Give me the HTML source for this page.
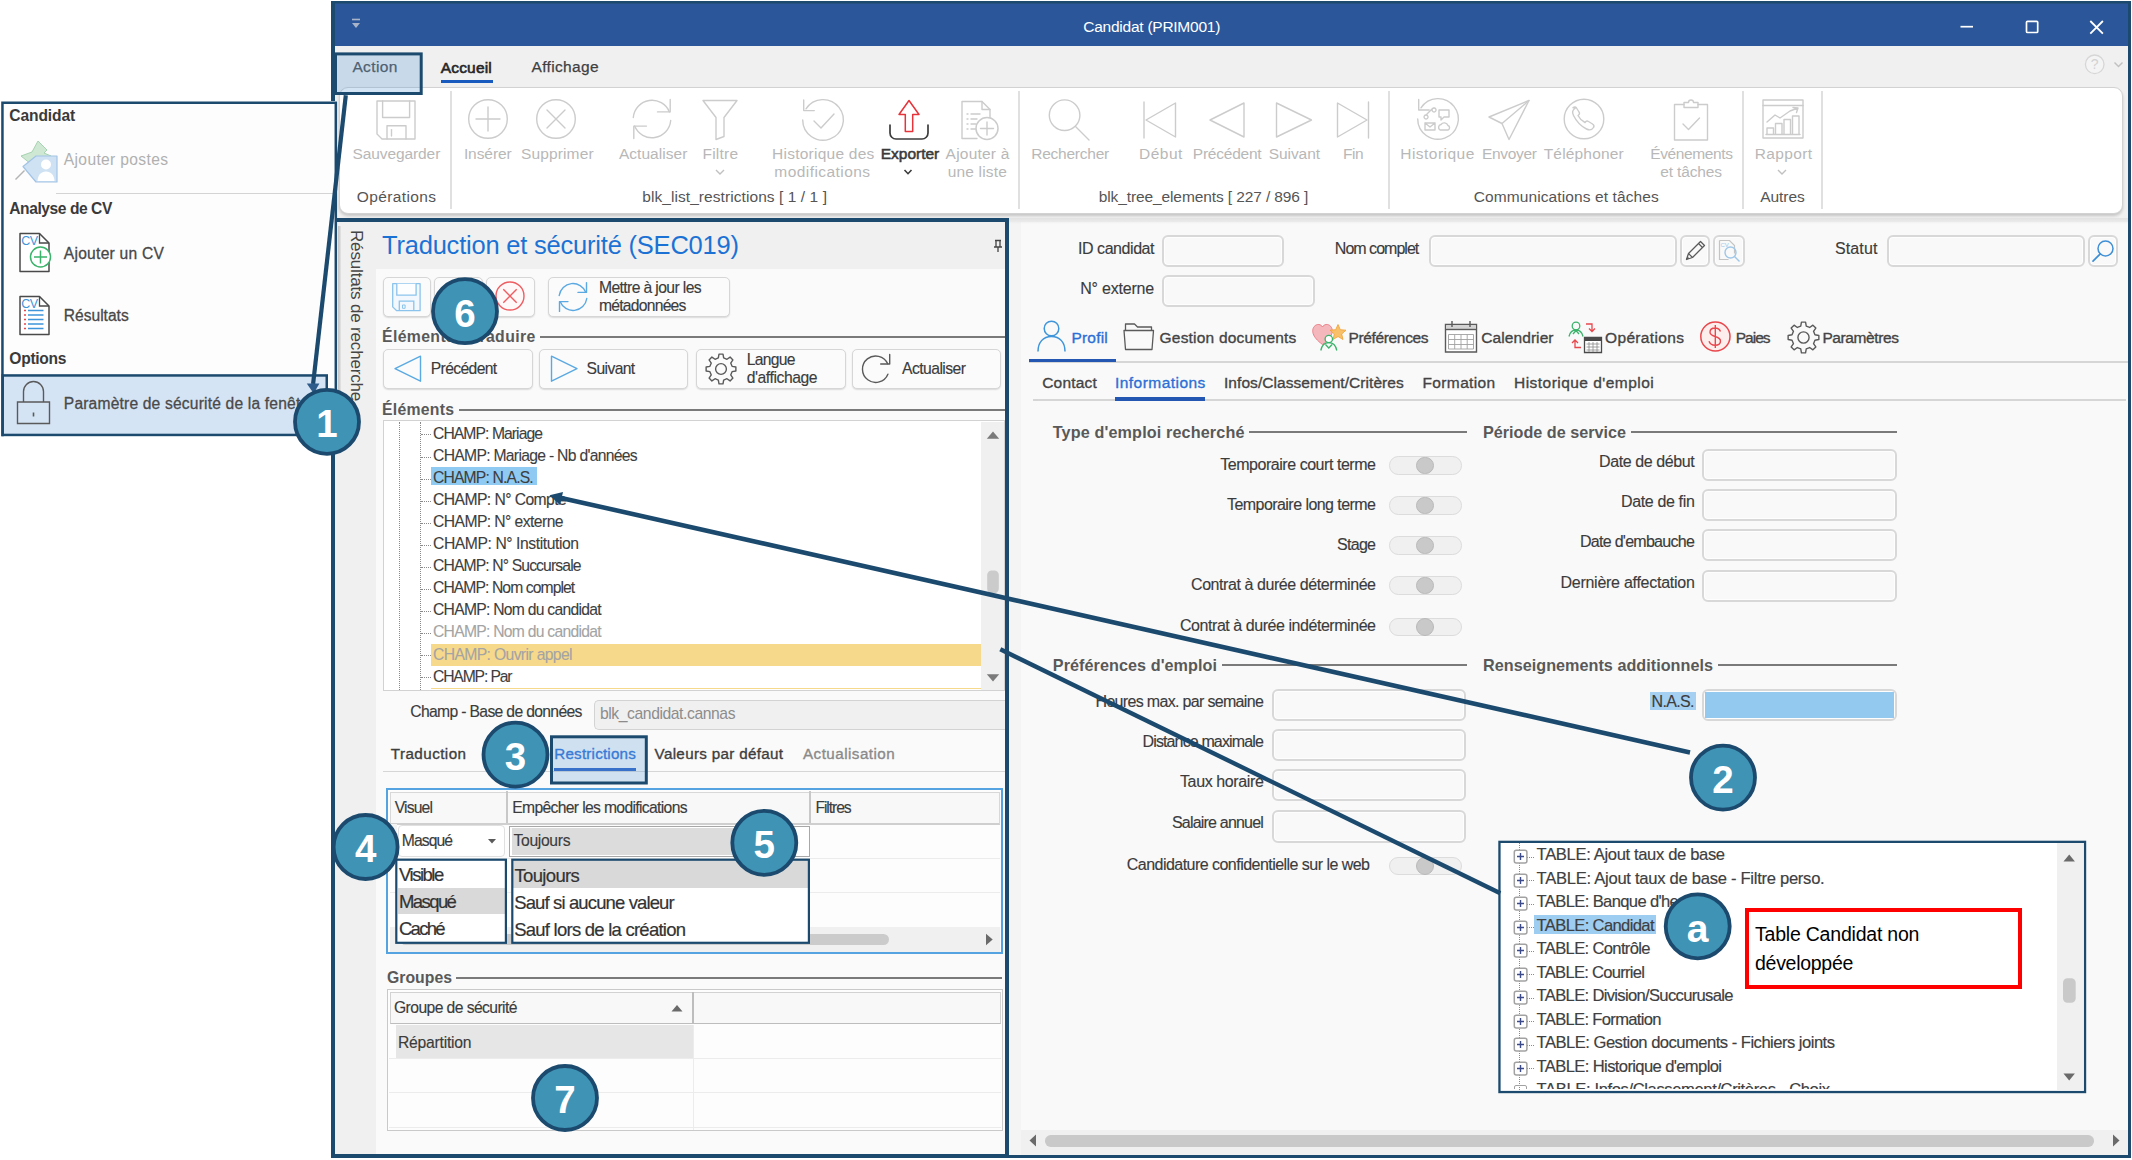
<!DOCTYPE html>
<html lang="fr"><head><meta charset="utf-8"><title>Candidat (PRIM001)</title>
<style>
html,body{margin:0;padding:0;}
body{width:2132px;height:1160px;position:relative;overflow:hidden;background:#fff;font-family:"Liberation Sans",sans-serif;}
.b{position:absolute;box-sizing:border-box;}
.t{position:absolute;white-space:nowrap;}
svg{overflow:visible;}

</style></head>
<body>
<div class="b" style="left:331px;top:1px;width:1800px;height:1157px;background:#1b4a6e;"></div>
<div class="b" style="left:335px;top:3.5px;width:1793px;height:42.9px;background:#2b579a;"></div>
<div class="b" style="left:335px;top:2.5px;width:1793px;height:1.5px;background:#25507f;"></div>
<div class="b" style="left:335px;top:46.4px;width:1793px;height:1108.8px;background:#f0f0f0;"></div>
<svg class="b" style="left:349px;top:16px;" width="14" height="14" viewBox="0 0 14 14"><path d="M3 3.5h8" stroke="#aab4c8" stroke-width="1.6" fill="none"/><path d="M3 7h8l-4 5z" fill="#aab4c8"/></svg>
<div class="t" style="left:1083.30px;top:17.30px;font-size:15.5px;line-height:20px;color:#ffffff;letter-spacing:-0.252px;">Candidat (PRIM001)</div>
<svg class="b" style="left:1950.7px;top:13.8px;" width="160" height="26" viewBox="0 0 160 26"><path d="M9.5 12.7h12.5" stroke="#fff" stroke-width="1.7" fill="none"/><rect x="75.5" y="7.3" width="11.2" height="11.2" rx="1" fill="none" stroke="#fff" stroke-width="1.7"/><path d="M139.3 7l12.6 12.6M151.9 7l-12.6 12.6" stroke="#fff" stroke-width="1.8" fill="none"/></svg>
<div class="t" style="left:352.40px;top:57.30px;font-size:15.5px;line-height:20px;color:#4a4a4a;letter-spacing:0.364px;-webkit-text-stroke:0.25px #4a4a4a;">Action</div>
<div class="t" style="left:440.80px;top:57.60px;font-size:15.5px;line-height:20px;color:#262626;letter-spacing:0.156px;-webkit-text-stroke:0.6px #262626;">Accueil</div>
<div class="b" style="left:440.8px;top:79.6px;width:52px;height:3px;background:#185abd;"></div>
<div class="t" style="left:531.50px;top:57.30px;font-size:15.5px;line-height:20px;color:#404040;letter-spacing:0.344px;-webkit-text-stroke:0.25px #404040;">Affichage</div>
<svg class="b" style="left:2083.2px;top:52.7px;" width="46" height="24" viewBox="0 0 46 24"><circle cx="11.7" cy="11.3" r="9.3" fill="#f4f4f4" stroke="#d6d6d6" stroke-width="1.3"/><text x="11.7" y="16.3" font-size="14" text-anchor="middle" fill="#d2d2d2" font-family="Liberation Sans, sans-serif">?</text><path d="M31.500 9.500l4 4 4-4" fill="none" stroke="#c2c2c2" stroke-width="1.500"/></svg>
<div class="b" style="left:339px;top:86.5px;width:1783.5px;height:127.3px;background:#ffffff;border:1.3px solid #d2d2d2;border-radius:9px;box-shadow:0 2px 3px rgba(0,0,0,0.18);"></div>
<div class="b" style="left:450px;top:91px;width:2px;height:118px;background:#e0e0e0;"></div>
<div class="b" style="left:1018px;top:91px;width:2px;height:118px;background:#e0e0e0;"></div>
<div class="b" style="left:1388px;top:91px;width:2px;height:118px;background:#e0e0e0;"></div>
<div class="b" style="left:1742px;top:91px;width:2px;height:118px;background:#e0e0e0;"></div>
<div class="b" style="left:1821px;top:91px;width:2px;height:118px;background:#e0e0e0;"></div>
<svg class="b" style="left:374.3px;top:97.5px;" width="44" height="44" viewBox="-22 -22 44 44"><path d="M-19 -19h38v38h-33l-5 -5z" fill="none" stroke="#cccccc" stroke-width="1.4" stroke-linejoin="round" stroke-linecap="round"/><path d="M-13.400 -19v16.500h27v-16.500" fill="none" stroke="#cccccc" stroke-width="1.4" stroke-linejoin="round" stroke-linecap="round"/><path d="M-9 19v-13.200h19v13.200" fill="none" stroke="#cccccc" stroke-width="1.4" stroke-linejoin="round" stroke-linecap="round"/><path d="M-4.500 9.600v6.400" fill="none" stroke="#cccccc" stroke-width="1.4" stroke-linejoin="round" stroke-linecap="round"/></svg>
<div class="t" style="left:352.40px;top:144.10px;font-size:15.5px;line-height:20px;color:#b8b8b8;letter-spacing:-0.085px;">Sauvegarder</div>
<div class="t" style="left:356.70px;top:187.00px;font-size:15.5px;line-height:20px;color:#555555;letter-spacing:0.387px;">Opérations</div>
<svg class="b" style="left:466px;top:97px;" width="44" height="44" viewBox="-22 -22 44 44"><circle r="19.3" fill="none" stroke="#cccccc" stroke-width="1.4" stroke-linejoin="round" stroke-linecap="round"/><path d="M-12 0h24M0 -12v24" fill="none" stroke="#cccccc" stroke-width="1.4" stroke-linejoin="round" stroke-linecap="round"/></svg>
<div class="t" style="left:463.90px;top:144.10px;font-size:15.5px;line-height:20px;color:#b8b8b8;letter-spacing:-0.073px;">Insérer</div>
<svg class="b" style="left:533.6px;top:97px;" width="44" height="44" viewBox="-22 -22 44 44"><circle r="19.3" fill="none" stroke="#cccccc" stroke-width="1.4" stroke-linejoin="round" stroke-linecap="round"/><path d="M-9 -9l18 18M9 -9l-18 18" fill="none" stroke="#cccccc" stroke-width="1.4" stroke-linejoin="round" stroke-linecap="round"/></svg>
<div class="t" style="left:520.90px;top:144.10px;font-size:15.5px;line-height:20px;color:#b8b8b8;letter-spacing:0.150px;">Supprimer</div>
<svg class="b" style="left:629.8px;top:97px;" width="44" height="44" viewBox="-22 -22 44 44"><path d="M-18.700 -1.500A18.800 18.800 0 0 1 17.400 -7.100" fill="none" stroke="#cccccc" stroke-width="1.4" stroke-linejoin="round" stroke-linecap="round"/><path d="M18.700 1.500A18.800 18.800 0 0 1 -17.400 7.100" fill="none" stroke="#cccccc" stroke-width="1.4" stroke-linejoin="round" stroke-linecap="round"/><path d="M5.500 -7.100h12.700v-12.400" fill="none" stroke="#cccccc" stroke-width="1.4" stroke-linejoin="round" stroke-linecap="round"/><path d="M-5.500 7.100h-12.700v12.400" fill="none" stroke="#cccccc" stroke-width="1.4" stroke-linejoin="round" stroke-linecap="round"/></svg>
<div class="t" style="left:618.90px;top:144.10px;font-size:15.5px;line-height:20px;color:#b8b8b8;letter-spacing:0.038px;">Actualiser</div>
<svg class="b" style="left:697.5px;top:97.5px;" width="44" height="44" viewBox="-22 -22 44 44"><path d="M-17 -19.5h34l-13 17v19l-8 3v-22z" fill="none" stroke="#cccccc" stroke-width="1.4" stroke-linejoin="round" stroke-linecap="round"/></svg>
<div class="t" style="left:702.50px;top:144.10px;font-size:15.5px;line-height:20px;color:#b8b8b8;letter-spacing:0.211px;">Filtre</div>
<svg class="b" style="left:714px;top:167px;" width="12" height="10" viewBox="0 0 12 10"><path d="M2 3l4 4 4-4" fill="none" stroke="#c0c0c0" stroke-width="1.4"/></svg>
<svg class="b" style="left:800.6px;top:97.6px;" width="44" height="44" viewBox="-22 -22 44 44"><path d="M-17 -11.200A20.300 20.300 0 1 1 -20.300 0" fill="none" stroke="#cccccc" stroke-width="1.4" stroke-linejoin="round" stroke-linecap="round"/><path d="M-19.300 -20v10.600h10.600" fill="none" stroke="#cccccc" stroke-width="1.4" stroke-linejoin="round" stroke-linecap="round"/><path d="M-9 1l7 7 13 -14" fill="none" stroke="#cccccc" stroke-width="1.4" stroke-linejoin="round" stroke-linecap="round"/></svg>
<div class="t" style="left:772.00px;top:144.10px;font-size:15.5px;line-height:20px;color:#b8b8b8;letter-spacing:0.248px;">Historique des</div>
<div class="t" style="left:774.30px;top:161.80px;font-size:15.5px;line-height:20px;color:#b8b8b8;letter-spacing:0.437px;">modifications</div>
<svg class="b" style="left:887.4px;top:97.5px;" width="44" height="44" viewBox="-22 -22 44 44"><path d="M-19 5v8a6 6 0 0 0 6 6h26a6 6 0 0 0 6 -6v-8" fill="none" stroke="#3c3c3c" stroke-width="1.7" stroke-linecap="round"/><path d="M0 -19.5l-10 14h6.3v17h7.4v-17h6.3z" fill="#fff" stroke="#e5343a" stroke-width="1.5" stroke-linejoin="round"/></svg>
<div class="t" style="left:880.70px;top:144.10px;font-size:15.5px;line-height:20px;color:#3a3a3a;-webkit-text-stroke:0.55px #3a3a3a;">Exporter</div>
<svg class="b" style="left:901.8px;top:166.5px;" width="12" height="10" viewBox="0 0 12 10"><path d="M2.5 3l3.5 3.7 3.5-3.7" fill="none" stroke="#3a3a3a" stroke-width="1.6"/></svg>
<svg class="b" style="left:958px;top:97.5px;" width="44" height="44" viewBox="-22 -22 44 44"><path d="M-3 18.5h-15v-37h20l8 8v8" fill="none" stroke="#cccccc" stroke-width="1.4" stroke-linejoin="round" stroke-linecap="round"/><path d="M2 -18.5v8h8" fill="none" stroke="#cccccc" stroke-width="1.4" stroke-linejoin="round" stroke-linecap="round"/><path d="M-13 -6h1M-13 -1h1M-13 4h1M-13 9h1M-9 -6h9M-9 -1h6M-9 4h5M-9 9h6" fill="none" stroke="#cccccc" stroke-width="1.4" stroke-linejoin="round" stroke-linecap="round" stroke-width="1"/><circle cx="7" cy="8.5" r="11" fill="#fff" stroke="#cccccc" stroke-width="1.5"/><path d="M0.5 8.5h13M7 2v13" fill="none" stroke="#cccccc" stroke-width="1.4" stroke-linejoin="round" stroke-linecap="round"/></svg>
<div class="t" style="left:945.60px;top:144.10px;font-size:15.5px;line-height:20px;color:#b8b8b8;letter-spacing:0.220px;">Ajouter à</div>
<div class="t" style="left:947.70px;top:161.80px;font-size:15.5px;line-height:20px;color:#b8b8b8;letter-spacing:0.171px;">une liste</div>
<div class="t" style="left:642.20px;top:187.00px;font-size:15.5px;line-height:20px;color:#555555;letter-spacing:0.073px;">blk_list_restrictions [ 1 / 1 ]</div>
<svg class="b" style="left:1048px;top:97.5px;" width="44" height="44" viewBox="-22 -22 44 44"><circle cx="-5.4" cy="-4.8" r="15.3" fill="none" stroke="#cccccc" stroke-width="1.4" stroke-linejoin="round" stroke-linecap="round"/><path d="M5.5 6.5l13.5 13.5" fill="none" stroke="#cccccc" stroke-width="1.4" stroke-linejoin="round" stroke-linecap="round"/></svg>
<div class="t" style="left:1031.20px;top:144.10px;font-size:15.5px;line-height:20px;color:#b8b8b8;letter-spacing:-0.235px;">Rechercher</div>
<svg class="b" style="left:1138px;top:98px;" width="44" height="44" viewBox="-22 -22 44 44"><path d="M-16 -18v36" fill="none" stroke="#cccccc" stroke-width="1.4" stroke-linejoin="round" stroke-linecap="round"/><path d="M-14 0l29.5 -17v34z" fill="none" stroke="#cccccc" stroke-width="1.4" stroke-linejoin="round" stroke-linecap="round"/></svg>
<div class="t" style="left:1139.00px;top:144.10px;font-size:15.5px;line-height:20px;color:#b8b8b8;letter-spacing:0.485px;">Début</div>
<svg class="b" style="left:1205px;top:98px;" width="44" height="44" viewBox="-22 -22 44 44"><path d="M-17 0l34 -17v34z" fill="none" stroke="#cccccc" stroke-width="1.4" stroke-linejoin="round" stroke-linecap="round"/></svg>
<div class="t" style="left:1192.80px;top:144.10px;font-size:15.5px;line-height:20px;color:#b8b8b8;letter-spacing:-0.232px;">Précédent</div>
<svg class="b" style="left:1272px;top:98px;" width="44" height="44" viewBox="-22 -22 44 44"><path d="M17.5 0l-35 -17v34z" fill="none" stroke="#cccccc" stroke-width="1.4" stroke-linejoin="round" stroke-linecap="round"/></svg>
<div class="t" style="left:1268.70px;top:144.10px;font-size:15.5px;line-height:20px;color:#b8b8b8;letter-spacing:-0.067px;">Suivant</div>
<svg class="b" style="left:1330.5px;top:98px;" width="44" height="44" viewBox="-22 -22 44 44"><path d="M15.5 -18v36" fill="none" stroke="#cccccc" stroke-width="1.4" stroke-linejoin="round" stroke-linecap="round"/><path d="M14 0l-29.5 -17v34z" fill="none" stroke="#cccccc" stroke-width="1.4" stroke-linejoin="round" stroke-linecap="round"/></svg>
<div class="t" style="left:1343.00px;top:144.10px;font-size:15.5px;line-height:20px;color:#b8b8b8;letter-spacing:-0.516px;">Fin</div>
<div class="t" style="left:1098.70px;top:187.00px;font-size:15.5px;line-height:20px;color:#555555;letter-spacing:-0.104px;">blk_tree_elements [ 227 / 896 ]</div>
<svg class="b" style="left:1415.7px;top:97px;" width="44" height="44" viewBox="-22 -22 44 44"><path d="M-17 -11.200A20.300 20.300 0 1 1 -20.300 0" fill="none" stroke="#cccccc" stroke-width="1.4" stroke-linejoin="round" stroke-linecap="round"/><path d="M-19.300 -19.500v10.500h10.500" fill="none" stroke="#cccccc" stroke-width="1.4" stroke-linejoin="round" stroke-linecap="round"/><path d="M-11 -5l5 -5M-12 -4a2 2 0 1 0 0.1 0M-4 -11a2 2 0 1 0 0.1 0" fill="none" stroke="#cccccc" stroke-width="1.4" stroke-linejoin="round" stroke-linecap="round" stroke-width="1.1"/><path d="M1 -9h10v7h-5l-3 3v-3h-2z" fill="none" stroke="#cccccc" stroke-width="1.4" stroke-linejoin="round" stroke-linecap="round" stroke-width="1.1"/><path d="M-13 4h10v7h-10zM-13 4l5 4 5 -4" fill="none" stroke="#cccccc" stroke-width="1.4" stroke-linejoin="round" stroke-linecap="round" stroke-width="1.1"/><path d="M2 11a3 3 0 0 1 1 -5.5a4 4 0 0 1 7 1a2.4 2.4 0 0 1 0 4.5z" fill="none" stroke="#cccccc" stroke-width="1.4" stroke-linejoin="round" stroke-linecap="round" stroke-width="1.1"/></svg>
<div class="t" style="left:1400.30px;top:144.10px;font-size:15.5px;line-height:20px;color:#b8b8b8;letter-spacing:0.469px;">Historique</div>
<svg class="b" style="left:1487px;top:97.5px;" width="44" height="44" viewBox="-22 -22 44 44"><path d="M20 -19.5l-40 16.5 13 6.5 7 16z" fill="none" stroke="#cccccc" stroke-width="1.4" stroke-linejoin="round" stroke-linecap="round"/><path d="M20 -19.5l-27 23" fill="none" stroke="#cccccc" stroke-width="1.4" stroke-linejoin="round" stroke-linecap="round"/></svg>
<div class="t" style="left:1482.00px;top:144.10px;font-size:15.5px;line-height:20px;color:#b8b8b8;letter-spacing:-0.310px;">Envoyer</div>
<svg class="b" style="left:1561.7px;top:97px;" width="44" height="44" viewBox="-22 -22 44 44"><circle r="19.8" fill="none" stroke="#cccccc" stroke-width="1.4" stroke-linejoin="round" stroke-linecap="round"/><path d="M-9 -10.5c-2.5 1.5 -3 4 -1.5 7c3 6 7 10.5 13 13.5c3 1.500 5.500 1 7 -1.500c1 -1.500 0.500 -2.500 -1 -3.500l-4 -2.500c-1.500 -1 -2.500 -0.500 -3.500 1c-3 -1.500 -5.500 -4 -7 -7c1.500 -1 2 -2 1 -3.500l-2.500 -4c-1 -1.500 -2 -1.500 -3.500 -0.500z" fill="none" stroke="#cccccc" stroke-width="1.4" stroke-linejoin="round" stroke-linecap="round" stroke-width="1.3"/></svg>
<div class="t" style="left:1543.70px;top:144.10px;font-size:15.5px;line-height:20px;color:#b8b8b8;letter-spacing:0.176px;">Téléphoner</div>
<svg class="b" style="left:1669px;top:97.5px;" width="44" height="44" viewBox="-22 -22 44 44"><path d="M-7 -15.500h-9.500v35.500h33v-35.500h-9.500" fill="none" stroke="#cccccc" stroke-width="1.4" stroke-linejoin="round" stroke-linecap="round"/><path d="M-7 -12.500v-5h4.500a2.500 2.500 0 0 1 5 0h4.500v5z" fill="none" stroke="#cccccc" stroke-width="1.4" stroke-linejoin="round" stroke-linecap="round"/><path d="M-8 4l5.500 5.500 11 -11.500" fill="none" stroke="#cccccc" stroke-width="1.4" stroke-linejoin="round" stroke-linecap="round"/></svg>
<div class="t" style="left:1650.30px;top:144.10px;font-size:15.5px;line-height:20px;color:#b8b8b8;letter-spacing:-0.384px;">Événements</div>
<div class="t" style="left:1660.30px;top:161.80px;font-size:15.5px;line-height:20px;color:#b8b8b8;letter-spacing:-0.150px;">et tâches</div>
<div class="t" style="left:1473.70px;top:187.00px;font-size:15.5px;line-height:20px;color:#555555;letter-spacing:0.103px;">Communications et tâches</div>
<svg class="b" style="left:1761.2px;top:97.3px;" width="44" height="44" viewBox="-22 -22 44 44"><path d="M-20 -19h40v38h-40z" fill="none" stroke="#cccccc" stroke-width="1.4" stroke-linejoin="round" stroke-linecap="round"/><path d="M-20 -13.500h40" fill="none" stroke="#cccccc" stroke-width="1.4" stroke-linejoin="round" stroke-linecap="round"/><path d="M-16 15.500v-6.500h6.500v6.500M-7.500 15.500v-11h6.500v11M1 15.500v-15h6.500v15M9.500 15.500v-18.500h6.500v18.500M-17 15.500h34" fill="none" stroke="#cccccc" stroke-width="1.4" stroke-linejoin="round" stroke-linecap="round" stroke-width="1.2"/><path d="M-16 3l8 -7 5 3 10 -7 8 -3M10 -11.500l5 0.500 -1.500 4.500" fill="none" stroke="#cccccc" stroke-width="1.4" stroke-linejoin="round" stroke-linecap="round" stroke-width="1.2"/></svg>
<div class="t" style="left:1754.70px;top:144.10px;font-size:15.5px;line-height:20px;color:#b8b8b8;letter-spacing:0.359px;">Rapport</div>
<svg class="b" style="left:1776px;top:167px;" width="12" height="10" viewBox="0 0 12 10"><path d="M2 3l4 4 4-4" fill="none" stroke="#c0c0c0" stroke-width="1.4"/></svg>
<div class="t" style="left:1760.30px;top:187.00px;font-size:15.5px;line-height:20px;color:#555555;letter-spacing:-0.079px;">Autres</div>
<div class="b" style="left:331px;top:218px;width:678px;height:940px;background:#1b4a6e;"></div>
<div class="b" style="left:335px;top:222px;width:670px;height:932px;background:#fafafa;"></div>
<div class="b" style="left:335px;top:222px;width:40.5px;height:932px;background:#f0f0f0;"></div>
<div class="b" style="left:337.5px;top:225.8px;width:3.7px;height:183.2px;background:linear-gradient(90deg,#c4c4c4,#d2d2d2 55%,#e6e6e6);"></div>
<div class="b" style="left:375.5px;top:222px;width:629.5px;height:47px;background:#f0f0f0;"></div>
<div class="t" style="left:355.7px;top:229.7px;font-size:17px;line-height:20px;color:#454545;transform-origin:0 0;transform:rotate(90deg) translate(0,-10px);letter-spacing:-0.167px;">Résultats de recherche</div>
<div class="t" style="left:382.00px;top:229.30px;font-size:25.5px;line-height:32px;color:#1c72d4;letter-spacing:-0.210px;">Traduction et sécurité (SEC019)</div>
<svg class="b" style="left:992.2px;top:239px;" width="12" height="14" viewBox="0 0 12 14"><path d="M3 1.500h6M4 1.500v6M8 1.500v6M2 8h8M6 8v5" fill="none" stroke="#444" stroke-width="1.3"/></svg>
<div class="b" style="left:382.7px;top:277px;width:48.6px;height:39.5px;background:#fbfbfb;border:1px solid #d6d6d6;border-radius:5px;box-shadow:0 1px 1.5px rgba(0,0,0,0.13);"></div>
<div class="b" style="left:434.3px;top:277px;width:48.5px;height:39.5px;background:#fbfbfb;border:1px solid #d6d6d6;border-radius:5px;box-shadow:0 1px 1.5px rgba(0,0,0,0.13);"></div>
<div class="b" style="left:485.8px;top:277px;width:48.9px;height:39.5px;background:#fbfbfb;border:1px solid #d6d6d6;border-radius:5px;box-shadow:0 1px 1.5px rgba(0,0,0,0.13);"></div>
<div class="b" style="left:548.3px;top:277px;width:181.4px;height:39.5px;background:#fbfbfb;border:1px solid #d6d6d6;border-radius:5px;box-shadow:0 1px 1.5px rgba(0,0,0,0.13);"></div>
<svg class="b" style="left:392.4px;top:282.5px;" width="29" height="28.5" viewBox="0 0 29 28.5"><path d="M0.700 0.700h27.400v27h-23.400l-4 -3.800z" fill="#f2f8fd" stroke="#8cc3ec" stroke-width="1.300" stroke-linejoin="round"/><path d="M4.800 0.700v11.500h19.300v-11.500" fill="#fdfeff" stroke="#8cc3ec" stroke-width="1.300"/><path d="M7.300 27.700v-9.500h14.500v9.500" fill="none" stroke="#8cc3ec" stroke-width="1.300"/><path d="M10.500 22h2.600v3.300h-2.600z" fill="none" stroke="#8cc3ec" stroke-width="1"/></svg>
<svg class="b" style="left:494.8px;top:281.3px;" width="30" height="30" viewBox="0 0 30 30"><circle cx="15" cy="15" r="14" fill="#fff8f8" stroke="#ee5d61" stroke-width="1.400"/><path d="M8.300 8.300l13.400 13.400M21.700 8.300l-13.400 13.400" fill="none" stroke="#ee5d61" stroke-width="1.400"/></svg>
<svg class="b" style="left:558.1px;top:281.5px;" width="30" height="30" viewBox="0 0 30 30"><path d="M1.200 13.500A13.900 13.900 0 0 1 27.900 10.400" fill="none" stroke="#5aa9e2" stroke-width="1.4" stroke-linejoin="round" stroke-linecap="round"/><path d="M28.800 16.500A13.900 13.900 0 0 1 2.100 19.600" fill="none" stroke="#5aa9e2" stroke-width="1.4" stroke-linejoin="round" stroke-linecap="round"/><path d="M20 10.400h8.500v-9.800" fill="none" stroke="#5aa9e2" stroke-width="1.4" stroke-linejoin="round" stroke-linecap="round"/><path d="M10 19.600h-8.500v9.800" fill="none" stroke="#5aa9e2" stroke-width="1.4" stroke-linejoin="round" stroke-linecap="round"/></svg>
<div class="t" style="left:599.00px;top:278.00px;font-size:15.7px;line-height:20px;color:#3c3c3c;letter-spacing:-0.617px;-webkit-text-stroke:0.15px #3c3c3c;">Mettre à jour les</div>
<div class="t" style="left:599.00px;top:295.70px;font-size:15.7px;line-height:20px;color:#3c3c3c;letter-spacing:-0.767px;-webkit-text-stroke:0.15px #3c3c3c;">métadonnées</div>
<div class="t" style="left:382.00px;top:325.50px;font-size:15.8px;line-height:21px;color:#595959;font-weight:bold;letter-spacing:0.366px;">Éléments à traduire</div>
<div class="b" style="left:540px;top:336px;width:465px;height:2px;background:#7a7a7a;"></div>
<div class="b" style="left:382.7px;top:349px;width:149.9px;height:40px;background:#fbfbfb;border:1px solid #d6d6d6;border-radius:5px;box-shadow:0 1px 1.5px rgba(0,0,0,0.13);"></div>
<div class="b" style="left:539px;top:349px;width:149px;height:40px;background:#fbfbfb;border:1px solid #d6d6d6;border-radius:5px;box-shadow:0 1px 1.5px rgba(0,0,0,0.13);"></div>
<div class="b" style="left:696px;top:349px;width:149.5px;height:40px;background:#fbfbfb;border:1px solid #d6d6d6;border-radius:5px;box-shadow:0 1px 1.5px rgba(0,0,0,0.13);"></div>
<div class="b" style="left:852px;top:349px;width:149px;height:40px;background:#fbfbfb;border:1px solid #d6d6d6;border-radius:5px;box-shadow:0 1px 1.5px rgba(0,0,0,0.13);"></div>
<svg class="b" style="left:394px;top:355px;" width="28" height="28" viewBox="0 0 28 28"><path d="M1 13.700l25.500 -12.500v25z" fill="none" stroke="#5aa9e2" stroke-width="1.4" stroke-linejoin="round" stroke-linecap="round"/></svg>
<div class="t" style="left:430.80px;top:359.00px;font-size:15.7px;line-height:20px;color:#3c3c3c;letter-spacing:-0.639px;-webkit-text-stroke:0.15px #3c3c3c;">Précédent</div>
<svg class="b" style="left:550px;top:355px;" width="28" height="28" viewBox="0 0 28 28"><path d="M27 13.700l-25.500 -12.500v25z" fill="none" stroke="#5aa9e2" stroke-width="1.4" stroke-linejoin="round" stroke-linecap="round"/></svg>
<div class="t" style="left:586.60px;top:359.00px;font-size:15.7px;line-height:20px;color:#3c3c3c;letter-spacing:-0.621px;-webkit-text-stroke:0.15px #3c3c3c;">Suivant</div>
<svg class="b" style="left:703.8px;top:351.7px;" width="34" height="34" viewBox="-17 -17 34 34"><path d="M11.09 -2.66 L14.87 -2.00 L14.87 2.00 L11.09 2.66 L9.72 5.96 L11.92 9.10 L9.10 11.92 L5.96 9.72 L2.66 11.09 L2.00 14.87 L-2.00 14.87 L-2.66 11.09 L-5.96 9.72 L-9.10 11.92 L-11.92 9.10 L-9.72 5.96 L-11.09 2.66 L-14.87 2.00 L-14.87 -2.00 L-11.09 -2.66 L-9.72 -5.96 L-11.92 -9.10 L-9.10 -11.92 L-5.96 -9.72 L-2.66 -11.09 L-2.00 -14.87 L2.00 -14.87 L2.66 -11.09 L5.96 -9.72 L9.10 -11.92 L11.92 -9.10 L9.72 -5.96Z" fill="none" stroke="#5a5a5a" stroke-width="1.4" stroke-linejoin="round"/><circle r="5.40" fill="none" stroke="#5a5a5a" stroke-width="1.4"/></svg>
<div class="t" style="left:746.70px;top:350.00px;font-size:15.7px;line-height:20px;color:#3c3c3c;letter-spacing:-0.710px;-webkit-text-stroke:0.15px #3c3c3c;">Langue</div>
<div class="t" style="left:746.70px;top:367.60px;font-size:15.7px;line-height:20px;color:#3c3c3c;letter-spacing:-0.421px;-webkit-text-stroke:0.15px #3c3c3c;">d'affichage</div>
<svg class="b" style="left:0px;top:0px;" width="1" height="1" viewBox="0 0 1 1"><path d="M887.7 363.7A13.200 13.200 0 1 0 887.9 374.2" fill="none" stroke="#5a5a5a" stroke-width="1.400" stroke-linejoin="round" stroke-linecap="round"/><path d="M880.700 364h9v-9.500" fill="none" stroke="#5a5a5a" stroke-width="1.400" stroke-linejoin="round" stroke-linecap="round"/></svg>
<div class="t" style="left:902.00px;top:359.00px;font-size:15.7px;line-height:20px;color:#3c3c3c;letter-spacing:-0.542px;-webkit-text-stroke:0.15px #3c3c3c;">Actualiser</div>
<div class="t" style="left:382.00px;top:399.00px;font-size:15.8px;line-height:21px;color:#595959;font-weight:bold;letter-spacing:0.252px;">Éléments</div>
<div class="b" style="left:458.7px;top:409px;width:546.3px;height:2px;background:#7a7a7a;"></div>
<div class="b" style="left:382.5px;top:420.2px;width:622.5px;height:271.3px;background:#ffffff;border:1.8px solid #d2d2d2;"></div>
<div class="b" style="left:981px;top:422px;width:23px;height:268px;background:#f0f0f0;"></div>
<svg class="b" style="left:981px;top:422px;" width="23" height="268" viewBox="0 0 23 268"><path d="M5.800 16.700l6.200 -7.300 6.200 7.300z" fill="#7a7a7a"/><path d="M5.800 252.300l6.200 7.300 6.200 -7.300z" fill="#7a7a7a"/><rect x="6.200" y="148.500" width="11.600" height="22.700" rx="4.500" fill="#cbcbcb"/></svg>
<div class="b" style="left:399.300px;top:422px;width:0;height:268px;border-left:1.300px dotted #8a8a8a;"></div>
<div class="b" style="left:420px;top:422px;width:0;height:268px;border-left:1.300px dotted #8a8a8a;"></div>
<div class="b" style="left:431px;top:467.3px;width:105.8px;height:17.4px;background:#8fcaf2;"></div>
<div class="b" style="left:431px;top:644px;width:550px;height:21.7px;background:#f7d98b;"></div>
<div class="b" style="left:431px;top:687.7px;width:550px;height:1.3px;background:#f7d98b;"></div>
<div class="b" style="left:421px;top:434.4px;width:9.500px;height:0;border-top:1.300px dotted #8a8a8a;"></div>
<div class="t" style="left:433.00px;top:423.90px;font-size:15.7px;line-height:20px;color:#3e3e3e;letter-spacing:-0.927px;-webkit-text-stroke:0.1px #3e3e3e;">CHAMP: Mariage</div>
<div class="b" style="left:421px;top:456.5px;width:9.500px;height:0;border-top:1.300px dotted #8a8a8a;"></div>
<div class="t" style="left:433.00px;top:445.96px;font-size:15.7px;line-height:20px;color:#3e3e3e;letter-spacing:-0.699px;-webkit-text-stroke:0.1px #3e3e3e;">CHAMP: Mariage - Nb d'années</div>
<div class="b" style="left:421px;top:478.5px;width:9.500px;height:0;border-top:1.300px dotted #8a8a8a;"></div>
<div class="t" style="left:433.00px;top:468.02px;font-size:15.7px;line-height:20px;color:#3e3e3e;letter-spacing:-0.833px;-webkit-text-stroke:0.1px #3e3e3e;">CHAMP: N.A.S.</div>
<div class="b" style="left:421px;top:500.6px;width:9.500px;height:0;border-top:1.300px dotted #8a8a8a;"></div>
<div class="t" style="left:433.00px;top:490.08px;font-size:15.7px;line-height:20px;color:#3e3e3e;letter-spacing:-0.566px;-webkit-text-stroke:0.15px #3e3e3e;">CHAMP: N° Compte</div>
<div class="b" style="left:421px;top:522.6px;width:9.500px;height:0;border-top:1.300px dotted #8a8a8a;"></div>
<div class="t" style="left:433.00px;top:512.14px;font-size:15.7px;line-height:20px;color:#3e3e3e;letter-spacing:-0.572px;-webkit-text-stroke:0.1px #3e3e3e;">CHAMP: N° externe</div>
<div class="b" style="left:421px;top:544.7px;width:9.500px;height:0;border-top:1.300px dotted #8a8a8a;"></div>
<div class="t" style="left:433.00px;top:534.20px;font-size:15.7px;line-height:20px;color:#3e3e3e;letter-spacing:-0.424px;-webkit-text-stroke:0.1px #3e3e3e;">CHAMP: N° Institution</div>
<div class="b" style="left:421px;top:566.8px;width:9.500px;height:0;border-top:1.300px dotted #8a8a8a;"></div>
<div class="t" style="left:433.00px;top:556.26px;font-size:15.7px;line-height:20px;color:#3e3e3e;letter-spacing:-0.865px;-webkit-text-stroke:0.1px #3e3e3e;">CHAMP: N° Succursale</div>
<div class="b" style="left:421px;top:588.8px;width:9.500px;height:0;border-top:1.300px dotted #8a8a8a;"></div>
<div class="t" style="left:433.00px;top:578.32px;font-size:15.7px;line-height:20px;color:#3e3e3e;letter-spacing:-0.916px;-webkit-text-stroke:0.1px #3e3e3e;">CHAMP: Nom complet</div>
<div class="b" style="left:421px;top:610.9px;width:9.500px;height:0;border-top:1.300px dotted #8a8a8a;"></div>
<div class="t" style="left:433.00px;top:600.38px;font-size:15.7px;line-height:20px;color:#3e3e3e;letter-spacing:-0.737px;-webkit-text-stroke:0.1px #3e3e3e;">CHAMP: Nom du candidat</div>
<div class="b" style="left:421px;top:632.9px;width:9.500px;height:0;border-top:1.300px dotted #8a8a8a;"></div>
<div class="t" style="left:433.00px;top:622.44px;font-size:15.7px;line-height:20px;color:#a4a4a4;letter-spacing:-0.737px;-webkit-text-stroke:0.1px #a4a4a4;">CHAMP: Nom du candidat</div>
<div class="b" style="left:421px;top:655.0px;width:9.500px;height:0;border-top:1.300px dotted #8a8a8a;"></div>
<div class="t" style="left:433.00px;top:644.50px;font-size:15.7px;line-height:20px;color:#a4a4a4;letter-spacing:-0.629px;-webkit-text-stroke:0.1px #a4a4a4;">CHAMP: Ouvrir appel</div>
<div class="b" style="left:421px;top:677.1px;width:9.500px;height:0;border-top:1.300px dotted #8a8a8a;"></div>
<div class="t" style="left:433.00px;top:666.56px;font-size:15.7px;line-height:20px;color:#3e3e3e;letter-spacing:-1.142px;-webkit-text-stroke:0.1px #3e3e3e;">CHAMP: Par</div>
<div class="t" style="left:410.30px;top:702.00px;font-size:15.7px;line-height:20px;color:#3c3c3c;letter-spacing:-0.660px;-webkit-text-stroke:0.15px #3c3c3c;">Champ - Base de données</div>
<div class="b" style="left:593.8px;top:699.7px;width:411.2px;height:30.1px;background:#f0f0f0;border:1.2px solid #d3d3d3;border-right:none;border-radius:5px 0 0 5px;"></div>
<div class="t" style="left:600.00px;top:703.50px;font-size:15.7px;line-height:20px;color:#8c8c8c;letter-spacing:-0.419px;">blk_candidat.cannas</div>
<div class="b" style="left:383px;top:771px;width:622px;height:1.3px;background:#d6d6d6;"></div>
<div class="t" style="left:390.80px;top:744.00px;font-size:15.2px;line-height:20px;color:#3e3e3e;letter-spacing:0.445px;-webkit-text-stroke:0.35px #3e3e3e;">Traduction</div>
<div class="t" style="left:554.30px;top:744.00px;font-size:15.2px;line-height:20px;color:#2b6fd6;letter-spacing:0.197px;-webkit-text-stroke:0.35px #2b6fd6;">Restrictions</div>
<div class="b" style="left:554.3px;top:768px;width:81.5px;height:3.3px;background:#2a62c4;"></div>
<div class="t" style="left:654.60px;top:744.00px;font-size:15.2px;line-height:20px;color:#3e3e3e;letter-spacing:0.319px;-webkit-text-stroke:0.35px #3e3e3e;">Valeurs par défaut</div>
<div class="t" style="left:803.00px;top:744.00px;font-size:15.2px;line-height:20px;color:#8a8a8a;letter-spacing:0.466px;-webkit-text-stroke:0.35px #8a8a8a;">Actualisation</div>
<div class="b" style="left:386.3px;top:788.4px;width:617.1px;height:165.6px;background:#ffffff;border:2px solid #55a3e0;"></div>
<div class="b" style="left:388.3px;top:790.4px;width:613.1px;height:161.6px;background:#fdfdfd;"></div>
<div class="b" style="left:390px;top:791.5px;width:610px;height:33px;background:#f8f8f8;border:1px solid #d8d8d8;border-bottom:2px solid #cfcfcf;"></div>
<div class="b" style="left:506px;top:790.5px;width:1.6px;height:32.5px;background:#c8c8c8;"></div>
<div class="b" style="left:809px;top:790.5px;width:1.6px;height:32.5px;background:#c8c8c8;"></div>
<div class="t" style="left:394.70px;top:797.50px;font-size:15.7px;line-height:20px;color:#3c3c3c;letter-spacing:-0.829px;-webkit-text-stroke:0.15px #3c3c3c;">Visuel</div>
<div class="t" style="left:512.20px;top:797.50px;font-size:15.7px;line-height:20px;color:#3c3c3c;letter-spacing:-0.657px;-webkit-text-stroke:0.15px #3c3c3c;">Empêcher les modifications</div>
<div class="t" style="left:815.40px;top:797.50px;font-size:15.7px;line-height:20px;color:#3c3c3c;letter-spacing:-1.067px;-webkit-text-stroke:0.15px #3c3c3c;">Filtres</div>
<div class="b" style="left:390px;top:858px;width:610px;height:1px;background:#ececec;"></div>
<div class="b" style="left:390px;top:892.3px;width:610px;height:1px;background:#ececec;"></div>
<div class="b" style="left:388px;top:823.5px;width:8.5px;height:34.5px;background:#f3f3f3;"></div>
<div class="b" style="left:397.5px;top:825px;width:107.5px;height:31.5px;background:#ffffff;border:1px solid #e0e0e0;border-radius:4px;"></div>
<div class="t" style="left:401.80px;top:831.00px;font-size:15.7px;line-height:20px;color:#3c3c3c;letter-spacing:-0.922px;-webkit-text-stroke:0.15px #3c3c3c;">Masqué</div>
<svg class="b" style="left:486px;top:837px;" width="12" height="8" viewBox="0 0 12 8"><path d="M2 2h8l-4 4.500z" fill="#5a5a5a"/></svg>
<div class="b" style="left:509px;top:825.5px;width:301px;height:31.5px;background:#ffffff;border:1.2px solid #a8a8a8;"></div>
<div class="b" style="left:511.5px;top:828px;width:278.5px;height:26.5px;background:#dcdcdc;"></div>
<div class="t" style="left:513.50px;top:831.00px;font-size:15.7px;line-height:20px;color:#3c3c3c;letter-spacing:-0.328px;-webkit-text-stroke:0.15px #3c3c3c;">Toujours</div>
<div class="b" style="left:390px;top:927px;width:610px;height:24.5px;background:#f0f0f0;"></div>
<div class="b" style="left:400px;top:933.5px;width:488.7px;height:11.9px;background:#cbcbcb;border-radius:6px;"></div>
<svg class="b" style="left:981.5px;top:932px;" width="14" height="16" viewBox="0 0 14 16"><path d="M4 1.700l6.700 5.800 -6.700 5.800z" fill="#6a6a6a"/></svg>
<div class="b" style="left:396px;top:859px;width:110px;height:84px;background:#ffffff;"></div>
<div class="b" style="left:397.7px;top:887.7px;width:107px;height:26.6px;background:#d9d9d9;"></div>
<div class="t" style="left:399.00px;top:863.00px;font-size:18.5px;line-height:24px;color:#333;letter-spacing:-1.494px;-webkit-text-stroke:0.2px #333;">Visible</div>
<div class="t" style="left:399.00px;top:890.00px;font-size:18.5px;line-height:24px;color:#333;letter-spacing:-1.583px;-webkit-text-stroke:0.2px #333;">Masqué</div>
<div class="t" style="left:399.00px;top:917.00px;font-size:18.5px;line-height:24px;color:#333;letter-spacing:-1.744px;-webkit-text-stroke:0.2px #333;">Caché</div>
<div class="b" style="left:512px;top:859px;width:297px;height:84px;background:#ffffff;"></div>
<div class="b" style="left:513.2px;top:860.3px;width:294.6px;height:27.4px;background:#d9d9d9;"></div>
<div class="t" style="left:514.50px;top:864.00px;font-size:18.5px;line-height:24px;color:#333;letter-spacing:-0.661px;-webkit-text-stroke:0.2px #333;">Toujours</div>
<div class="t" style="left:514.20px;top:891.00px;font-size:18.5px;line-height:24px;color:#333;letter-spacing:-0.871px;-webkit-text-stroke:0.2px #333;">Sauf si aucune valeur</div>
<div class="t" style="left:514.20px;top:917.50px;font-size:18.5px;line-height:24px;color:#333;letter-spacing:-0.757px;-webkit-text-stroke:0.2px #333;">Sauf lors de la création</div>
<div class="t" style="left:387.00px;top:967.00px;font-size:15.8px;line-height:21px;color:#595959;font-weight:bold;letter-spacing:0.008px;">Groupes</div>
<div class="b" style="left:456px;top:977px;width:546px;height:2px;background:#7a7a7a;"></div>
<div class="b" style="left:387px;top:988.8px;width:615.6px;height:142.4px;background:#fdfdfd;border:1.3px solid #c9c9c9;"></div>
<div class="b" style="left:389.5px;top:991.5px;width:611px;height:32.5px;background:#f8f8f8;border:1px solid #d2d2d2;border-bottom:1.300px solid #bdbdbd;"></div>
<div class="b" style="left:692px;top:991.5px;width:1.6px;height:32.5px;background:#bdbdbd;"></div>
<div class="t" style="left:394.00px;top:998.00px;font-size:15.7px;line-height:20px;color:#3c3c3c;letter-spacing:-0.584px;-webkit-text-stroke:0.15px #3c3c3c;">Groupe de sécurité</div>
<svg class="b" style="left:670px;top:1003px;" width="14" height="10" viewBox="0 0 14 10"><path d="M1.500 8.500l5.500 -6.500 5.500 6.500z" fill="#6a6a6a"/></svg>
<div class="b" style="left:396.3px;top:1024.5px;width:296.5px;height:33px;background:#e6e6e6;"></div>
<div class="t" style="left:398.00px;top:1033.00px;font-size:15.7px;line-height:20px;color:#3c3c3c;letter-spacing:-0.236px;-webkit-text-stroke:0.15px #3c3c3c;">Répartition</div>
<div class="b" style="left:389px;top:1057.8px;width:611.5px;height:1px;background:#ececec;"></div>
<div class="b" style="left:389px;top:1092.3px;width:611.5px;height:1px;background:#ececec;"></div>
<div class="b" style="left:389px;top:1126.8px;width:611.5px;height:1px;background:#ececec;"></div>
<div class="b" style="left:692.5px;top:1024.5px;width:1px;height:105px;background:#ececec;"></div>
<div class="b" style="left:1009px;top:222px;width:12px;height:933.2px;background:#f4f4f4;"></div>
<div class="b" style="left:1021px;top:222px;width:1107px;height:933.2px;background:#f9f9f9;"></div>
<div class="b" style="left:1009px;top:218px;width:1119px;height:6px;background:linear-gradient(180deg,#e2e2e2,rgba(249,249,249,0));"></div>
<div class="t" style="left:1078.00px;top:237.90px;font-size:16px;line-height:21px;color:#3c3c3c;letter-spacing:-0.444px;-webkit-text-stroke:0.15px #3c3c3c;">ID candidat</div>
<div class="b" style="left:1162px;top:235.3px;width:122.3px;height:31.5px;background:#f9f9f9;border:2px solid #d8d8d8;border-radius:6px;box-shadow:inset 0 0 0 1px #fefefe;"></div>
<div class="t" style="left:1334.80px;top:237.90px;font-size:16px;line-height:21px;color:#3c3c3c;letter-spacing:-0.975px;-webkit-text-stroke:0.15px #3c3c3c;">Nom complet</div>
<div class="b" style="left:1429.4px;top:235.3px;width:247.6px;height:31.5px;background:#f9f9f9;border:2px solid #d8d8d8;border-radius:6px;box-shadow:inset 0 0 0 1px #fefefe;"></div>
<div class="b" style="left:1679.7px;top:235.3px;width:30.3px;height:31.5px;background:#f9f9f9;border:2px solid #d8d8d8;border-radius:6px;box-shadow:inset 0 0 0 1px #fefefe;"></div>
<div class="b" style="left:1713.4px;top:235.3px;width:31.5px;height:31.5px;background:#f9f9f9;border:2px solid #d8d8d8;border-radius:6px;box-shadow:inset 0 0 0 1px #fefefe;"></div>
<svg class="b" style="left:1683px;top:239px;" width="24" height="24" viewBox="0 0 24 24"><path d="M3.500 20.500l2 -6 12 -12 4 4 -12 12z" fill="none" stroke="#5a5a5a" stroke-width="1.300" stroke-linejoin="round"/><path d="M5.500 14.500l4 4M15.500 4.500l4 4" fill="none" stroke="#5a5a5a" stroke-width="1.200"/><path d="M3.500 20.500l1 -3 2 2z" fill="#5a5a5a"/></svg>
<svg class="b" style="left:1717px;top:239px;" width="24" height="24" viewBox="0 0 24 24"><path d="M2.500 1.500h10l5 5v8M2.500 1.500v19h9" fill="none" stroke="#c4c4c4" stroke-width="1.200"/><circle cx="13.500" cy="13.500" r="5.500" fill="none" stroke="#9fc8e8" stroke-width="1.400"/><path d="M17.500 17.500l5 5" stroke="#9fc8e8" stroke-width="1.400"/><text x="3.500" y="8" font-size="6" fill="#9fc8e8" font-family="Liberation Sans, sans-serif">CV</text></svg>
<div class="t" style="left:1835.00px;top:237.90px;font-size:16px;line-height:21px;color:#3c3c3c;letter-spacing:0.119px;-webkit-text-stroke:0.15px #3c3c3c;">Statut</div>
<div class="b" style="left:1887px;top:235.3px;width:198.3px;height:31.5px;background:#f9f9f9;border:2px solid #d8d8d8;border-radius:6px;box-shadow:inset 0 0 0 1px #fefefe;"></div>
<div class="b" style="left:2087.7px;top:235.3px;width:30.6px;height:31.5px;background:#f9f9f9;border:2px solid #d8d8d8;border-radius:6px;box-shadow:inset 0 0 0 1px #fefefe;"></div>
<svg class="b" style="left:2091px;top:239px;" width="24" height="24" viewBox="0 0 24 24"><circle cx="14.500" cy="9.500" r="7.500" fill="none" stroke="#3f8fd6" stroke-width="1.500"/><path d="M9.300 14.800l-7.300 7.300" stroke="#3f8fd6" stroke-width="1.700" stroke-linecap="round"/></svg>
<div class="t" style="left:1080.20px;top:277.50px;font-size:16px;line-height:21px;color:#3c3c3c;letter-spacing:-0.196px;-webkit-text-stroke:0.15px #3c3c3c;">N° externe</div>
<div class="b" style="left:1162px;top:275.4px;width:152.5px;height:31.5px;background:#f9f9f9;border:2px solid #d8d8d8;border-radius:6px;box-shadow:inset 0 0 0 1px #fefefe;"></div>
<div class="b" style="left:1029px;top:360.7px;width:1099px;height:1.9px;background:#d6d6d6;"></div>
<div class="b" style="left:1029.4px;top:358.6px;width:86.9px;height:3.7px;background:#2457b2;"></div>
<svg class="b" style="left:1036px;top:319px;" width="32" height="34" viewBox="0 0 32 34"><circle cx="15.500" cy="9.500" r="7.300" fill="none" stroke="#3f95da" stroke-width="1.500"/><path d="M2 32.500c0 -9 5 -15 13.500 -15s13.500 6 13.500 15" fill="none" stroke="#3f95da" stroke-width="1.500"/></svg>
<div class="t" style="left:1071.40px;top:328.00px;font-size:15.5px;line-height:20px;color:#2b6fd6;letter-spacing:0.217px;-webkit-text-stroke:0.35px #2b6fd6;">Profil</div>
<svg class="b" style="left:1123px;top:322px;" width="33" height="30" viewBox="0 0 33 30"><path d="M2.500 27.500l-1.500 -19h29.500l-1.500 19z" fill="none" stroke="#5a5a5a" stroke-width="1.300" stroke-linejoin="round"/><path d="M2.500 8.500v-6.500h9l3 3h14v3.500" fill="none" stroke="#5a5a5a" stroke-width="1.300" stroke-linejoin="round"/></svg>
<div class="t" style="left:1159.60px;top:328.00px;font-size:15.5px;line-height:20px;color:#444;letter-spacing:0.197px;-webkit-text-stroke:0.35px #444;">Gestion documents</div>
<svg class="b" style="left:1311px;top:322px;" width="36" height="32" viewBox="0 0 36 32"><path d="M11.500 22.500c-11 -8 -11 -14.500 -8.300 -18c2.700 -3.200 6.900 -2.300 8.300 0.500c1.400 -2.800 5.600 -3.700 8.300 -0.500c2.700 3.500 2.700 10 -8.300 18z" fill="#f4b8bc" stroke="#ea8088" stroke-width="1"/><path d="M27 2.500l2.300 5.200 5.700 0.500 -4.300 3.800 1.300 5.500 -5 -3 -5 3 1.300 -5.500 -4.300 -3.800 5.700 -0.500z" fill="#f8c069" stroke="#f0a030" stroke-width="0.800"/><circle cx="17.800" cy="17" r="3.700" fill="#fff" stroke="#3bb36a" stroke-width="1.300"/><path d="M9.800 28.500c1 -5 4 -7.800 8 -7.800s7 2.800 8 7.800M14.500 22.500l3.300 3.500 3.300 -3.500" fill="none" stroke="#3bb36a" stroke-width="1.300"/></svg>
<div class="t" style="left:1348.40px;top:328.00px;font-size:15.5px;line-height:20px;color:#444;letter-spacing:-0.337px;-webkit-text-stroke:0.35px #444;">Préférences</div>
<svg class="b" style="left:1444px;top:320px;" width="34" height="33" viewBox="0 0 34 33"><path d="M1.500 4.500h31v27.500h-31z" fill="#fff" stroke="#5a5a5a" stroke-width="1.400"/><path d="M2.200 5.200h29.600v4.300h-29.600z" fill="#d4d4d4"/><path d="M1.500 9.500h31" stroke="#5a5a5a" stroke-width="1.400"/><path d="M8 1v6M26 1v6" stroke="#5a5a5a" stroke-width="1.400"/><path d="M4.500 14.500h25M4.500 19.500h25M4.500 24.500h25M4.500 29h25M4.500 14.500v14.500M10.700 14.500v14.500M17 14.500v14.500M23.200 14.500v14.500M29.500 14.500v14.500" stroke="#a0a0a0" stroke-width="0.900" fill="none"/></svg>
<div class="t" style="left:1481.30px;top:328.00px;font-size:15.5px;line-height:20px;color:#444;letter-spacing:0.077px;-webkit-text-stroke:0.35px #444;">Calendrier</div>
<svg class="b" style="left:1567px;top:320px;" width="36" height="34" viewBox="0 0 36 34"><circle cx="9" cy="6" r="3.800" fill="none" stroke="#3bb36a" stroke-width="1.300"/><path d="M2 16.500c1 -4.500 3.500 -6.500 7 -6.500s6 2 7 6.500M6 14l3 -3.500 3 3.500" fill="none" stroke="#3bb36a" stroke-width="1.300"/><path d="M19 4h6v7M22 8.500l3 3 3 -3" fill="none" stroke="#e8474c" stroke-width="1.300"/><path d="M14 27.500h-6v-7M5 23l3 -3 3 3" fill="none" stroke="#e8474c" stroke-width="1.300"/><path d="M17.500 17.500h17v15h-17z" fill="#fff" stroke="#4a4a4a" stroke-width="1.300"/><path d="M17.500 17.500h17v3.500h-17z" fill="#4a4a4a"/><path d="M19.500 24h13M19.500 27h13M19.500 30h13M22 22v10M26 22v10M30 22v10" stroke="#8a8a8a" stroke-width="0.800" fill="none"/></svg>
<div class="t" style="left:1605.00px;top:328.00px;font-size:15.5px;line-height:20px;color:#444;letter-spacing:0.353px;-webkit-text-stroke:0.35px #444;">Opérations</div>
<svg class="b" style="left:1699px;top:320px;" width="33" height="33" viewBox="0 0 33 33"><circle cx="16.400" cy="16.500" r="14.600" fill="#fdeeee" stroke="#e8474c" stroke-width="1.500"/><path d="M21.500 11.500c-1 -2.500 -3 -3.500 -5.500 -3.500c-3 0 -5 1.700 -5 4.200c0 5.500 10.500 3 10.500 8.800c0 2.500 -2.200 4.300 -5.500 4.300c-3 0 -5 -1.300 -6 -4M16.300 5v23" fill="none" stroke="#e8474c" stroke-width="1.400"/></svg>
<div class="t" style="left:1735.70px;top:328.00px;font-size:15.5px;line-height:20px;color:#444;letter-spacing:-0.968px;-webkit-text-stroke:0.35px #444;">Paies</div>
<svg class="b" style="left:1785.5px;top:319.5px;" width="35" height="35" viewBox="-17.5 -17.5 35 35"><path d="M11.45 -2.75 L15.36 -2.06 L15.36 2.06 L11.45 2.75 L10.04 6.16 L12.32 9.40 L9.40 12.32 L6.16 10.04 L2.75 11.45 L2.06 15.36 L-2.06 15.36 L-2.75 11.45 L-6.16 10.04 L-9.40 12.32 L-12.32 9.40 L-10.04 6.16 L-11.45 2.75 L-15.36 2.06 L-15.36 -2.06 L-11.45 -2.75 L-10.04 -6.16 L-12.32 -9.40 L-9.40 -12.32 L-6.16 -10.04 L-2.75 -11.45 L-2.06 -15.36 L2.06 -15.36 L2.75 -11.45 L6.16 -10.04 L9.40 -12.32 L12.32 -9.40 L10.04 -6.16Z" fill="none" stroke="#5a5a5a" stroke-width="1.4" stroke-linejoin="round"/><circle r="5.58" fill="none" stroke="#5a5a5a" stroke-width="1.4"/></svg>
<div class="t" style="left:1822.40px;top:328.00px;font-size:15.5px;line-height:20px;color:#444;letter-spacing:-0.390px;-webkit-text-stroke:0.35px #444;">Paramètres</div>
<div class="b" style="left:1033.4px;top:399.3px;width:1092.2px;height:1.8px;background:#d6d6d6;"></div>
<div class="t" style="left:1042.20px;top:373.40px;font-size:15.5px;line-height:20px;color:#444;letter-spacing:0.197px;-webkit-text-stroke:0.35px #444;">Contact</div>
<div class="t" style="left:1115.00px;top:373.40px;font-size:15.5px;line-height:20px;color:#2b6fd6;letter-spacing:0.456px;-webkit-text-stroke:0.35px #2b6fd6;">Informations</div>
<div class="b" style="left:1115px;top:397px;width:90.3px;height:3.8px;background:#2457b2;"></div>
<div class="t" style="left:1224.00px;top:373.40px;font-size:15.5px;line-height:20px;color:#444;letter-spacing:0.058px;-webkit-text-stroke:0.35px #444;">Infos/Classement/Critères</div>
<div class="t" style="left:1422.50px;top:373.40px;font-size:15.5px;line-height:20px;color:#444;letter-spacing:0.366px;-webkit-text-stroke:0.35px #444;">Formation</div>
<div class="t" style="left:1514.00px;top:373.40px;font-size:15.5px;line-height:20px;color:#444;letter-spacing:0.465px;-webkit-text-stroke:0.35px #444;">Historique d'emploi</div>
<div class="t" style="left:1052.80px;top:421.60px;font-size:16.2px;line-height:21px;color:#595959;font-weight:bold;letter-spacing:0.124px;">Type d'emploi recherché</div>
<div class="b" style="left:1248.9px;top:431px;width:217.7px;height:2px;background:#7a7a7a;"></div>
<div class="t" style="left:1483.00px;top:421.60px;font-size:16.2px;line-height:21px;color:#595959;font-weight:bold;">Période de service</div>
<div class="b" style="left:1630.5px;top:431px;width:266.3px;height:2px;background:#7a7a7a;"></div>
<div class="t" style="left:1052.80px;top:654.70px;font-size:16.2px;line-height:21px;color:#595959;font-weight:bold;letter-spacing:0.058px;">Préférences d'emploi</div>
<div class="b" style="left:1221.5px;top:664px;width:245.1px;height:2px;background:#7a7a7a;"></div>
<div class="t" style="left:1483.00px;top:654.70px;font-size:16.2px;line-height:21px;color:#595959;font-weight:bold;letter-spacing:0.024px;">Renseignements additionnels</div>
<div class="b" style="left:1717.5px;top:664px;width:179.3px;height:2px;background:#7a7a7a;"></div>
<div class="t" style="left:1220.20px;top:453.90px;font-size:16px;line-height:21px;color:#3c3c3c;letter-spacing:-0.457px;-webkit-text-stroke:0.15px #3c3c3c;">Temporaire court terme</div>
<div class="b" style="left:1388.5px;top:456.4px;width:73px;height:18.6px;background:#f0f0f0;border:1.7px solid #dcdcdc;border-radius:9.3px;"></div>
<div class="b" style="left:1416.3px;top:457px;width:17.4px;height:17.4px;background:#c9c9c9;border:1.2px solid #b9b9b9;border-radius:9px;"></div>
<div class="t" style="left:1227.00px;top:493.90px;font-size:16px;line-height:21px;color:#3c3c3c;letter-spacing:-0.554px;-webkit-text-stroke:0.15px #3c3c3c;">Temporaire long terme</div>
<div class="b" style="left:1388.5px;top:496.4px;width:73px;height:18.6px;background:#f0f0f0;border:1.7px solid #dcdcdc;border-radius:9.3px;"></div>
<div class="b" style="left:1416.3px;top:497px;width:17.4px;height:17.4px;background:#c9c9c9;border:1.2px solid #b9b9b9;border-radius:9px;"></div>
<div class="t" style="left:1337.00px;top:533.90px;font-size:16px;line-height:21px;color:#3c3c3c;letter-spacing:-0.703px;-webkit-text-stroke:0.15px #3c3c3c;">Stage</div>
<div class="b" style="left:1388.5px;top:536.4px;width:73px;height:18.6px;background:#f0f0f0;border:1.7px solid #dcdcdc;border-radius:9.3px;"></div>
<div class="b" style="left:1416.3px;top:537px;width:17.4px;height:17.4px;background:#c9c9c9;border:1.2px solid #b9b9b9;border-radius:9px;"></div>
<div class="t" style="left:1191.00px;top:573.70px;font-size:16px;line-height:21px;color:#3c3c3c;letter-spacing:-0.427px;-webkit-text-stroke:0.15px #3c3c3c;">Contrat à durée déterminée</div>
<div class="b" style="left:1388.5px;top:576.2px;width:73px;height:18.6px;background:#f0f0f0;border:1.7px solid #dcdcdc;border-radius:9.3px;"></div>
<div class="b" style="left:1416.3px;top:576.8px;width:17.4px;height:17.4px;background:#c9c9c9;border:1.2px solid #b9b9b9;border-radius:9px;"></div>
<div class="t" style="left:1180.00px;top:615.30px;font-size:16px;line-height:21px;color:#3c3c3c;letter-spacing:-0.449px;-webkit-text-stroke:0.15px #3c3c3c;">Contrat à durée indéterminée</div>
<div class="b" style="left:1388.5px;top:617.8px;width:73px;height:18.6px;background:#f0f0f0;border:1.7px solid #dcdcdc;border-radius:9.3px;"></div>
<div class="b" style="left:1416.3px;top:618.4px;width:17.4px;height:17.4px;background:#c9c9c9;border:1.2px solid #b9b9b9;border-radius:9px;"></div>
<div class="t" style="left:1599.00px;top:450.70px;font-size:16px;line-height:21px;color:#3c3c3c;letter-spacing:-0.394px;-webkit-text-stroke:0.15px #3c3c3c;">Date de début</div>
<div class="b" style="left:1702.3px;top:448.9px;width:194.5px;height:32.3px;background:#f9f9f9;border:2px solid #d8d8d8;border-radius:6px;box-shadow:inset 0 0 0 1px #fefefe;"></div>
<div class="t" style="left:1621.00px;top:490.90px;font-size:16px;line-height:21px;color:#3c3c3c;letter-spacing:-0.358px;-webkit-text-stroke:0.15px #3c3c3c;">Date de fin</div>
<div class="b" style="left:1702.3px;top:488.8px;width:194.5px;height:32.3px;background:#f9f9f9;border:2px solid #d8d8d8;border-radius:6px;box-shadow:inset 0 0 0 1px #fefefe;"></div>
<div class="t" style="left:1580.00px;top:530.90px;font-size:16px;line-height:21px;color:#3c3c3c;letter-spacing:-0.722px;-webkit-text-stroke:0.15px #3c3c3c;">Date d'embauche</div>
<div class="b" style="left:1702.3px;top:528.7px;width:194.5px;height:32.3px;background:#f9f9f9;border:2px solid #d8d8d8;border-radius:6px;box-shadow:inset 0 0 0 1px #fefefe;"></div>
<div class="t" style="left:1560.50px;top:572.10px;font-size:16px;line-height:21px;color:#3c3c3c;letter-spacing:-0.265px;-webkit-text-stroke:0.15px #3c3c3c;">Dernière affectation</div>
<div class="b" style="left:1702.3px;top:570.1px;width:194.5px;height:32.3px;background:#f9f9f9;border:2px solid #d8d8d8;border-radius:6px;box-shadow:inset 0 0 0 1px #fefefe;"></div>
<div class="t" style="left:1095.50px;top:690.90px;font-size:16px;line-height:21px;color:#3c3c3c;letter-spacing:-0.677px;-webkit-text-stroke:0.15px #3c3c3c;">Heures max. par semaine</div>
<div class="b" style="left:1271.7px;top:689px;width:194.8px;height:32.3px;background:#f9f9f9;border:2px solid #d8d8d8;border-radius:6px;box-shadow:inset 0 0 0 1px #fefefe;"></div>
<div class="t" style="left:1142.50px;top:730.70px;font-size:16px;line-height:21px;color:#3c3c3c;letter-spacing:-0.866px;-webkit-text-stroke:0.15px #3c3c3c;">Distance maximale</div>
<div class="b" style="left:1271.7px;top:728.9px;width:194.8px;height:32.3px;background:#f9f9f9;border:2px solid #d8d8d8;border-radius:6px;box-shadow:inset 0 0 0 1px #fefefe;"></div>
<div class="t" style="left:1180.00px;top:770.90px;font-size:16px;line-height:21px;color:#3c3c3c;letter-spacing:-0.386px;-webkit-text-stroke:0.15px #3c3c3c;">Taux horaire</div>
<div class="b" style="left:1271.7px;top:768.8px;width:194.8px;height:32.3px;background:#f9f9f9;border:2px solid #d8d8d8;border-radius:6px;box-shadow:inset 0 0 0 1px #fefefe;"></div>
<div class="t" style="left:1172.00px;top:812.30px;font-size:16px;line-height:21px;color:#3c3c3c;letter-spacing:-0.807px;-webkit-text-stroke:0.15px #3c3c3c;">Salaire annuel</div>
<div class="b" style="left:1271.7px;top:810.3px;width:194.8px;height:32.3px;background:#f9f9f9;border:2px solid #d8d8d8;border-radius:6px;box-shadow:inset 0 0 0 1px #fefefe;"></div>
<div class="t" style="left:1126.80px;top:854.30px;font-size:16px;line-height:21px;color:#3c3c3c;letter-spacing:-0.533px;-webkit-text-stroke:0.15px #3c3c3c;">Candidature confidentielle sur le web</div>
<div class="b" style="left:1388.5px;top:856.6px;width:73px;height:18.6px;background:#f0f0f0;border:1.7px solid #dcdcdc;border-radius:9.3px;"></div>
<div class="b" style="left:1416.3px;top:857.2px;width:17.4px;height:17.4px;background:#c9c9c9;border:1.2px solid #b9b9b9;border-radius:9px;"></div>
<div class="b" style="left:1649.7px;top:692px;width:46.6px;height:17.5px;background:#a6d0f2;"></div>
<div class="t" style="left:1651.50px;top:691.00px;font-size:16px;line-height:21px;color:#3c3c3c;letter-spacing:-0.647px;-webkit-text-stroke:0.15px #3c3c3c;">N.A.S.</div>
<div class="b" style="left:1702.3px;top:688.8px;width:194.5px;height:32.2px;background:#f9f9f9;border:2px solid #d8d8d8;border-radius:6px;box-shadow:inset 0 0 0 1px #fefefe;"></div>
<div class="b" style="left:1705.3px;top:692px;width:188.5px;height:26px;background:#93c9ef;"></div>
<div class="b" style="left:1021px;top:1130px;width:1107px;height:25.2px;background:#f0f0f0;"></div>
<div class="b" style="left:1044.5px;top:1135px;width:1049.5px;height:11.5px;background:#c9c9c9;border-radius:5.7px;"></div>
<svg class="b" style="left:1026px;top:1133px;" width="14" height="16" viewBox="0 0 14 16"><path d="M10 1.500l-6.500 6 6.500 6z" fill="#6a6a6a"/></svg>
<svg class="b" style="left:2109px;top:1133px;" width="14" height="16" viewBox="0 0 14 16"><path d="M4 1.500l6.500 6 -6.500 6z" fill="#6a6a6a"/></svg>
<div class="b" style="left:1499px;top:841px;width:587px;height:252px;background:#ffffff;"></div>
<div class="b" style="left:2057px;top:843px;width:26px;height:247px;background:#f0f0f0;"></div>
<svg class="b" style="left:2057px;top:843px;" width="26" height="247" viewBox="0 0 26 247"><path d="M6.500 18.500l5.700 -7 5.700 7z" fill="#6a6a6a"/><path d="M6.500 230.500l5.700 7 5.700 -7z" fill="#6a6a6a"/><rect x="6" y="135.300" width="12.700" height="24.500" rx="4.500" fill="#c9c9c9"/></svg>
<div class="b" style="left:1519.400px;top:843px;width:0;height:247px;border-left:1.300px dotted #8a8a8a;"></div>
<div class="b" style="left:1534.4px;top:915px;width:122.1px;height:18.5px;background:#9dcdf1;"></div>
<div class="b" style="left:1527px;top:856.6px;width:7px;height:0;border-top:1.300px dotted #8a8a8a;"></div>
<svg class="b" style="left:1513.5px;top:850.1px;" width="13" height="13" viewBox="0 0 13 13"><rect x="0.300" y="0.300" width="12.600" height="12.600" rx="2" fill="#fff" stroke="#a2a2a2" stroke-width="1.500"/><path d="M3 6.500h7M6.500 3v7" stroke="#3a4a8a" stroke-width="1.400"/></svg>
<div class="t" style="left:1536.60px;top:844.10px;font-size:16.6px;line-height:22px;color:#404040;letter-spacing:-0.359px;-webkit-text-stroke:0.18px #404040;">TABLE: Ajout taux de base</div>
<div class="b" style="left:1527px;top:880.1px;width:7px;height:0;border-top:1.300px dotted #8a8a8a;"></div>
<svg class="b" style="left:1513.5px;top:873.62px;" width="13" height="13" viewBox="0 0 13 13"><rect x="0.300" y="0.300" width="12.600" height="12.600" rx="2" fill="#fff" stroke="#a2a2a2" stroke-width="1.500"/><path d="M3 6.500h7M6.500 3v7" stroke="#3a4a8a" stroke-width="1.400"/></svg>
<div class="t" style="left:1536.60px;top:867.62px;font-size:16.6px;line-height:22px;color:#404040;letter-spacing:-0.284px;-webkit-text-stroke:0.18px #404040;">TABLE: Ajout taux de base - Filtre perso.</div>
<div class="b" style="left:1527px;top:903.6px;width:7px;height:0;border-top:1.300px dotted #8a8a8a;"></div>
<svg class="b" style="left:1513.5px;top:897.14px;" width="13" height="13" viewBox="0 0 13 13"><rect x="0.300" y="0.300" width="12.600" height="12.600" rx="2" fill="#fff" stroke="#a2a2a2" stroke-width="1.500"/><path d="M3 6.500h7M6.500 3v7" stroke="#3a4a8a" stroke-width="1.400"/></svg>
<div class="t" style="left:1536.60px;top:891.14px;font-size:16.6px;line-height:22px;color:#404040;letter-spacing:-0.646px;-webkit-text-stroke:0.18px #404040;">TABLE: Banque d'heures</div>
<div class="b" style="left:1527px;top:927.2px;width:7px;height:0;border-top:1.300px dotted #8a8a8a;"></div>
<svg class="b" style="left:1513.5px;top:920.66px;" width="13" height="13" viewBox="0 0 13 13"><rect x="0.300" y="0.300" width="12.600" height="12.600" rx="2" fill="#fff" stroke="#a2a2a2" stroke-width="1.500"/><path d="M3 6.500h7M6.500 3v7" stroke="#3a4a8a" stroke-width="1.400"/></svg>
<div class="t" style="left:1536.60px;top:914.66px;font-size:16.6px;line-height:22px;color:#404040;letter-spacing:-0.649px;-webkit-text-stroke:0.18px #404040;">TABLE: Candidat</div>
<div class="b" style="left:1527px;top:950.7px;width:7px;height:0;border-top:1.300px dotted #8a8a8a;"></div>
<svg class="b" style="left:1513.5px;top:944.18px;" width="13" height="13" viewBox="0 0 13 13"><rect x="0.300" y="0.300" width="12.600" height="12.600" rx="2" fill="#fff" stroke="#a2a2a2" stroke-width="1.500"/><path d="M3 6.500h7M6.500 3v7" stroke="#3a4a8a" stroke-width="1.400"/></svg>
<div class="t" style="left:1536.60px;top:938.18px;font-size:16.6px;line-height:22px;color:#404040;letter-spacing:-0.670px;-webkit-text-stroke:0.18px #404040;">TABLE: Contrôle</div>
<div class="b" style="left:1527px;top:974.2px;width:7px;height:0;border-top:1.300px dotted #8a8a8a;"></div>
<svg class="b" style="left:1513.5px;top:967.7px;" width="13" height="13" viewBox="0 0 13 13"><rect x="0.300" y="0.300" width="12.600" height="12.600" rx="2" fill="#fff" stroke="#a2a2a2" stroke-width="1.500"/><path d="M3 6.500h7M6.500 3v7" stroke="#3a4a8a" stroke-width="1.400"/></svg>
<div class="t" style="left:1536.60px;top:961.70px;font-size:16.6px;line-height:22px;color:#404040;letter-spacing:-0.732px;-webkit-text-stroke:0.18px #404040;">TABLE: Courriel</div>
<div class="b" style="left:1527px;top:997.7px;width:7px;height:0;border-top:1.300px dotted #8a8a8a;"></div>
<svg class="b" style="left:1513.5px;top:991.22px;" width="13" height="13" viewBox="0 0 13 13"><rect x="0.300" y="0.300" width="12.600" height="12.600" rx="2" fill="#fff" stroke="#a2a2a2" stroke-width="1.500"/><path d="M3 6.500h7M6.500 3v7" stroke="#3a4a8a" stroke-width="1.400"/></svg>
<div class="t" style="left:1536.60px;top:985.22px;font-size:16.6px;line-height:22px;color:#404040;letter-spacing:-0.680px;-webkit-text-stroke:0.18px #404040;">TABLE: Division/Succurusale</div>
<div class="b" style="left:1527px;top:1021.2px;width:7px;height:0;border-top:1.300px dotted #8a8a8a;"></div>
<svg class="b" style="left:1513.5px;top:1014.74px;" width="13" height="13" viewBox="0 0 13 13"><rect x="0.300" y="0.300" width="12.600" height="12.600" rx="2" fill="#fff" stroke="#a2a2a2" stroke-width="1.500"/><path d="M3 6.500h7M6.500 3v7" stroke="#3a4a8a" stroke-width="1.400"/></svg>
<div class="t" style="left:1536.60px;top:1008.74px;font-size:16.6px;line-height:22px;color:#404040;letter-spacing:-0.690px;-webkit-text-stroke:0.18px #404040;">TABLE: Formation</div>
<div class="b" style="left:1527px;top:1044.8px;width:7px;height:0;border-top:1.300px dotted #8a8a8a;"></div>
<svg class="b" style="left:1513.5px;top:1038.26px;" width="13" height="13" viewBox="0 0 13 13"><rect x="0.300" y="0.300" width="12.600" height="12.600" rx="2" fill="#fff" stroke="#a2a2a2" stroke-width="1.500"/><path d="M3 6.500h7M6.500 3v7" stroke="#3a4a8a" stroke-width="1.400"/></svg>
<div class="t" style="left:1536.60px;top:1032.26px;font-size:16.6px;line-height:22px;color:#404040;letter-spacing:-0.520px;-webkit-text-stroke:0.18px #404040;">TABLE: Gestion documents - Fichiers joints</div>
<div class="b" style="left:1527px;top:1068.3px;width:7px;height:0;border-top:1.300px dotted #8a8a8a;"></div>
<svg class="b" style="left:1513.5px;top:1061.78px;" width="13" height="13" viewBox="0 0 13 13"><rect x="0.300" y="0.300" width="12.600" height="12.600" rx="2" fill="#fff" stroke="#a2a2a2" stroke-width="1.500"/><path d="M3 6.500h7M6.500 3v7" stroke="#3a4a8a" stroke-width="1.400"/></svg>
<div class="t" style="left:1536.60px;top:1055.78px;font-size:16.6px;line-height:22px;color:#404040;letter-spacing:-0.630px;-webkit-text-stroke:0.18px #404040;">TABLE: Historique d'emploi</div>
<div class="b" style="left:1500.500px;top:1082px;width:556px;height:7px;overflow:hidden;"><div class="t" style="left:36.100px;top:-2.900px;font-size:16.600px;line-height:21px;color:#404040;letter-spacing:-0.390px;-webkit-text-stroke:0.18px #404040;">TABLE: Infos/Classement/Critères - Choix</div><div class="b" style="left:13.300px;top:2.500px;width:13px;height:13px;border:1.500px solid #a2a2a2;border-radius:2px;"></div></div>
<div class="b" style="left:1745px;top:908px;width:277px;height:81px;background:#ffffff;border:4px solid #ff0000;"></div>
<div class="t" style="left:1755.00px;top:921.00px;font-size:19.5px;line-height:26px;color:#000;letter-spacing:-0.214px;">Table Candidat non</div>
<div class="t" style="left:1755.00px;top:950.00px;font-size:19.5px;line-height:26px;color:#000;letter-spacing:-0.282px;">développée</div>
<div class="b" style="left:1px;top:101px;width:336px;height:335px;background:#fdfdfd;"></div>
<div class="t" style="left:9.30px;top:105.50px;font-size:15.6px;line-height:20px;color:#3a3a3a;font-weight:bold;letter-spacing:-0.115px;">Candidat</div>
<svg class="b" style="left:14px;top:139px;" width="46" height="46" viewBox="0 0 46 46"><path d="M7 17l11 -4 6 -11 9 9 -3 3 7 3 -10 5 -10 3z" fill="#cfe8d4" stroke="#a6d3b0" stroke-width="1"/><path d="M9 27.500l13 -10.500h21v26h-21z" fill="#cfe2f4" stroke="#a3c4e6" stroke-width="1.200" stroke-linejoin="round"/><circle cx="32" cy="25.500" r="5" fill="#fff"/><path d="M23.500 42c0.500 -6 3.500 -9.500 8.500 -9.500s8 3.500 8.500 9.500z" fill="#fff"/><path d="M1.500 40.500l9 -9" stroke="#b4b4b4" stroke-width="1.400"/></svg>
<div class="t" style="left:63.80px;top:150.00px;font-size:15.6px;line-height:20px;color:#b0b0b0;letter-spacing:0.347px;">Ajouter postes</div>
<div class="b" style="left:55.6px;top:193px;width:277.4px;height:1.4px;background:#d4d4d4;"></div>
<div class="t" style="left:9.30px;top:199.00px;font-size:15.6px;line-height:20px;color:#3a3a3a;font-weight:bold;letter-spacing:-0.444px;">Analyse de CV</div>
<svg class="b" style="left:18.7px;top:232.3px;" width="34" height="42" viewBox="0 0 34 42"><path d="M1 1.500h19.500l9.500 9.500v28.500h-29z" fill="#fff" stroke="#4a4a4a" stroke-width="1.500" stroke-linejoin="round"/><path d="M20.500 1.500v9.500h9.500" fill="none" stroke="#4a4a4a" stroke-width="1.300"/><text x="2.200" y="12.500" font-size="12.500" fill="#3f95da" font-family="Liberation Sans, sans-serif" letter-spacing="-0.500">CV</text><circle cx="21.500" cy="25" r="10" fill="#fff" stroke="#3bb36a" stroke-width="1.500"/><path d="M15 25h13M21.500 18.500v13" stroke="#3bb36a" stroke-width="1.500"/></svg>
<div class="t" style="left:63.80px;top:243.60px;font-size:15.6px;line-height:20px;color:#484848;letter-spacing:0.260px;-webkit-text-stroke:0.3px #484848;">Ajouter un CV</div>
<svg class="b" style="left:18.7px;top:295.3px;" width="34" height="42" viewBox="0 0 34 42"><path d="M1 1.500h19.500l9.500 9.500v28.500h-29z" fill="#fff" stroke="#4a4a4a" stroke-width="1.500" stroke-linejoin="round"/><path d="M20.500 1.500v9.500h9.500" fill="none" stroke="#4a4a4a" stroke-width="1.300"/><text x="2.200" y="12.500" font-size="12.500" fill="#3f95da" font-family="Liberation Sans, sans-serif" letter-spacing="-0.500">CV</text><path d="M9 15.500h15.500M9 20h15.500M9 24.500h15.500M9 29h15.500M9 33.500h15.500" stroke="#3f95da" stroke-width="1.500"/><path d="M5 15.500h2M5 20h2M5 24.500h2M5 29h2M5 33.500h2" stroke="#e8474c" stroke-width="1.500"/></svg>
<div class="t" style="left:63.80px;top:305.50px;font-size:15.6px;line-height:20px;color:#484848;letter-spacing:-0.013px;-webkit-text-stroke:0.3px #484848;">Résultats</div>
<div class="t" style="left:9.30px;top:348.80px;font-size:15.6px;line-height:20px;color:#3a3a3a;font-weight:bold;letter-spacing:-0.284px;">Options</div>
<div class="b" style="left:2px;top:375px;width:325px;height:60px;background:#d5e4f4;"></div>
<svg class="b" style="left:16px;top:380px;" width="36" height="46" viewBox="0 0 36 46"><path d="M7.500 22v-10.500a10 10 0 0 1 20 0v10.500" fill="none" stroke="#5a5a5a" stroke-width="1.400"/><path d="M1.500 22h32v21.500h-32z" fill="none" stroke="#5a5a5a" stroke-width="1.400"/><path d="M17.500 32.500v4" stroke="#5a5a5a" stroke-width="1.600"/></svg>
<div class="t" style="left:63.80px;top:393.70px;font-size:15.6px;line-height:20px;color:#4a4a4a;letter-spacing:0.184px;-webkit-text-stroke:0.3px #4a4a4a;">Paramètre de sécurité de la fenêtre</div>
<div class="b" style="left:336px;top:53px;width:86px;height:41px;background:rgba(91,155,213,0.27);"></div>
<div class="b" style="left:551px;top:736px;width:96px;height:48px;background:rgba(91,155,213,0.27);"></div>
<svg class="b" style="left:0;top:0;" width="2132" height="1160" viewBox="0 0 2132 1160"><path d="M2.450 436.200V102.700H335.800V436.200" fill="none" stroke="#1b4a6e" stroke-width="2.500"/><rect x="2.65" y="375.45" width="324.10" height="59.50" fill="none" stroke="#1b4a6e" stroke-width="2.5"/><rect x="335.50" y="53.90" width="85.70" height="39.60" fill="none" stroke="#1b4a6e" stroke-width="3"/><rect x="551.50" y="736.80" width="94.80" height="46.20" fill="none" stroke="#1b4a6e" stroke-width="3"/><rect x="396.30" y="859.70" width="109.60" height="83.10" fill="none" stroke="#1b4a6e" stroke-width="2.2"/><rect x="512.30" y="859.70" width="296.60" height="83.10" fill="none" stroke="#1b4a6e" stroke-width="2.2"/><rect x="1499.45" y="841.85" width="585.60" height="250.20" fill="none" stroke="#1b4a6e" stroke-width="2.3"/><path d="M345.800 95.200L313.100 384" stroke="#1b4a6e" stroke-width="4.200" fill="none"/>
<path d="M306.800 383.600h12.600l-5.700 10z" fill="#2e5d8c"/>
<path d="M1690 752.400L560 497.650" stroke="#1b4a6e" stroke-width="4.600" fill="none"/>
<path d="M549.500 495.300l13.500 -3.200 -3 13z" fill="#1b4a6e"/>
<path d="M1000.300 649.300L1500.300 893.200" stroke="#1b4a6e" stroke-width="4.400" fill="none"/><circle cx="327" cy="421.8" r="32" fill="#3f93b5" stroke="#1b4a6e" stroke-width="3.800"/><text x="327" y="437.1" font-size="38.5" font-weight="bold" text-anchor="middle" fill="#ffffff" font-family="Liberation Sans, sans-serif">1</text><circle cx="1723" cy="777.6" r="32" fill="#3f93b5" stroke="#1b4a6e" stroke-width="3.800"/><text x="1723" y="792.9" font-size="38.5" font-weight="bold" text-anchor="middle" fill="#ffffff" font-family="Liberation Sans, sans-serif">2</text><circle cx="515.5" cy="754.6" r="32" fill="#3f93b5" stroke="#1b4a6e" stroke-width="3.800"/><text x="515.5" y="769.9" font-size="38.5" font-weight="bold" text-anchor="middle" fill="#ffffff" font-family="Liberation Sans, sans-serif">3</text><circle cx="365.6" cy="847" r="32" fill="#3f93b5" stroke="#1b4a6e" stroke-width="3.800"/><text x="365.6" y="862.3" font-size="38.5" font-weight="bold" text-anchor="middle" fill="#ffffff" font-family="Liberation Sans, sans-serif">4</text><circle cx="764.3" cy="842.8" r="32" fill="#3f93b5" stroke="#1b4a6e" stroke-width="3.800"/><text x="764.3" y="858.1" font-size="38.5" font-weight="bold" text-anchor="middle" fill="#ffffff" font-family="Liberation Sans, sans-serif">5</text><circle cx="465" cy="311.2" r="32" fill="#3f93b5" stroke="#1b4a6e" stroke-width="3.800"/><text x="465" y="326.5" font-size="38.5" font-weight="bold" text-anchor="middle" fill="#ffffff" font-family="Liberation Sans, sans-serif">6</text><circle cx="565" cy="1098" r="32" fill="#3f93b5" stroke="#1b4a6e" stroke-width="3.800"/><text x="565" y="1113.3" font-size="38.5" font-weight="bold" text-anchor="middle" fill="#ffffff" font-family="Liberation Sans, sans-serif">7</text><circle cx="1697.7" cy="926.3" r="32" fill="#3f93b5" stroke="#1b4a6e" stroke-width="3.800"/><text x="1697.7" y="941.6" font-size="39" font-weight="bold" text-anchor="middle" fill="#ffffff" font-family="Liberation Sans, sans-serif">a</text></svg>
</body></html>
